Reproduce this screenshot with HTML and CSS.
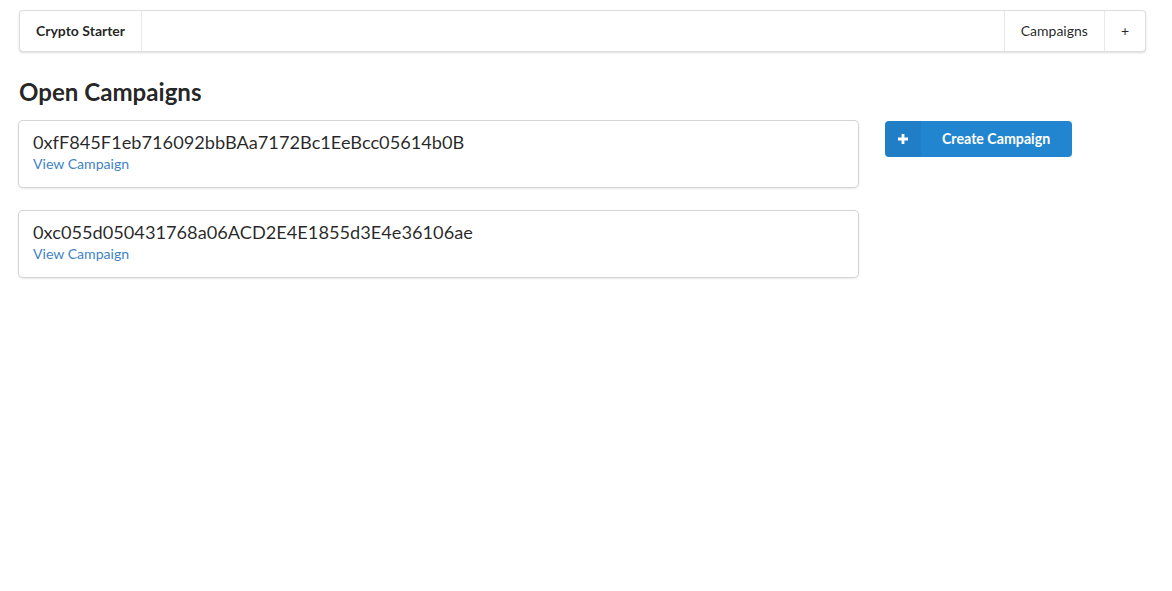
FILE: index.html
```html
<!DOCTYPE html>
<html>
<head>
<meta charset="utf-8">
<link rel="stylesheet" href="styles.css">
</head>
<body>
<div class="container">
  <nav class="menu">
    <a class="item brand">Crypto Starter</a>
    <div class="right">
      <a class="item">Campaigns</a>
      <a class="item">+</a>
    </div>
  </nav>
  <h2 class="title">Open Campaigns</h2>
  <div class="grid">
    <div class="cards">
      <div class="card">
        <div class="header">0xfF845F1eb716092bbBAa7172Bc1EeBcc05614b0B</div>
        <div class="description"><a class="link">View Campaign</a></div>
      </div>
      <div class="card">
        <div class="header">0xc055d050431768a06ACD2E4E1855d3E4e36106ae</div>
        <div class="description"><a class="link">View Campaign</a></div>
      </div>
    </div>
    <div class="side">
      <button class="button">
        <span class="icon"><svg width="12" height="12" viewBox="0 0 12 12"><path d="M4.6 1h2.8v3.6H11v2.8H7.4V11H4.6V7.4H1V4.6h3.6z" fill="#fff"/></svg></span>
        Create Campaign
      </button>
    </div>
  </div>
</div>
</body>
</html>
```
FILE: styles.css
```css
* { box-sizing: border-box; }
html, body { margin: 0; padding: 0; background: #fff; }
body {
  font-family: Lato, "Helvetica Neue", Arial, sans-serif;
  font-size: 14px;
  line-height: 1.4285em;
  color: rgba(0,0,0,.87);
}
.container {
  width: 1127px;
  margin-left: 19px;
  padding: 10px 0 20px;
}
.menu {
  display: flex;
  min-height: 42px;
  border: 1px solid rgba(34,36,38,.15);
  border-radius: 4px;
  box-shadow: 0 1px 2px 0 rgba(34,36,38,.15);
  background: #fff;
}
.menu .right { margin-left: auto; display: flex; }
.item {
  display: flex;
  align-items: center;
  padding: 13px 16px;
  font-size: 14px;
  line-height: 1;
  color: rgba(0,0,0,.87);
  position: relative;
  cursor: pointer;
}
.item.brand { font-weight: 700; border-right: 1px solid rgba(34,36,38,.1); }
.right .item { border-left: 1px solid rgba(34,36,38,.1); }
.title {
  font-size: 24.1px;
  font-weight: 700;
  line-height: 31px;
  margin: 24px 0 14px;
  color: rgba(0,0,0,.87);
}
.grid { display: flex; align-items: flex-start; padding-bottom: 10px; }
.cards { width: 839px; display: flex; flex-direction: column; gap: 24px; padding-bottom: 4px; }
.side { margin-left: 27px; }
.card {
  background: #fff;
  border-radius: 4px;
  box-shadow: 0 1px 3px 0 #d4d4d5, 0 0 0 1px #d4d4d5;
  padding: 14px 14px 13px;
}
.card .header {
  font-size: 18.2px;
  line-height: 23px;
  margin-top: -4px;
  font-weight: 400;
  color: rgba(0,0,0,.85);
}
.card .description { line-height: 20px; font-size: 14.1px; }
.link { color: #4183c4; text-decoration: none; cursor: pointer; }
.button {
  position: relative;
  display: inline-block;
  height: 36px;
  padding: 11px 22px 11px 57px;
  font-family: Lato, "Helvetica Neue", Arial, sans-serif;
  font-size: 14.2px;
  font-weight: 700;
  line-height: 1;
  color: #fff;
  background: #2185d0;
  border: none;
  border-radius: 4px;
  cursor: pointer;
}
.button .icon {
  position: absolute;
  left: 0; top: 0;
  width: 36px; height: 36px;
  background: rgba(0,0,0,.05);
  border-radius: 4px 0 0 4px;
  display: flex;
  align-items: center;
  justify-content: center;
}
```
